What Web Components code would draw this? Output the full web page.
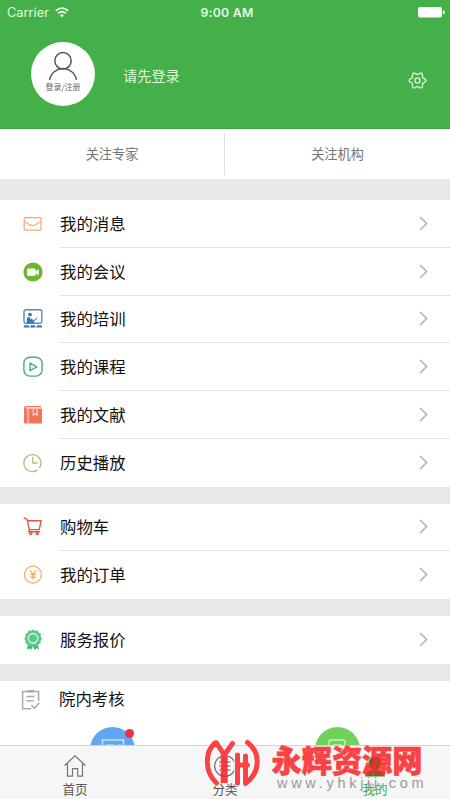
<!DOCTYPE html>
<html lang="zh-CN"><head><meta charset="utf-8"><title>我的</title>
<style>
html,body{margin:0;height:100%;overflow:hidden;background:#fff}
body{font-family:"Noto Sans CJK SC",sans-serif}
</style></head><body>
<app-screen></app-screen>
<script>
const define=(name,html,init)=>customElements.define(name,class extends HTMLElement{
  constructor(){super();const t=document.createElement('template');t.innerHTML=html;
    this.attachShadow({mode:'open'}).append(t.content.cloneNode(true));}
  connectedCallback(){if(init)init.call(this,this.shadowRoot);}
});
const icons={
mail:'<g fill="none" stroke="#f0a878" stroke-width="1.2"><rect x="1.2" y="3.6" width="16.8" height="12.6" rx=".8"/><path d="M1.6 8Q3.5 8.2 5.4 10q4 3.2 8.2 0 2-1.8 4.2-2"/></g>',
video:'<circle cx="10" cy="10" r="9.6" fill="#6cb52d"/><rect x="4" y="6.4" width="8.6" height="7.6" rx="1.4" fill="#fff"/><path d="M12.2 9.7 15.7 7v6.6l-3.5-2.4z" fill="#fff"/>',
train:'<rect x="1" y=".7" width="17.8" height="13.6" rx="2" fill="none" stroke="#4d8bc8" stroke-width="1.4"/><g fill="#3976b8"><circle cx="7" cy="5.6" r="1.9"/><path d="M3.8 14.4V10Q4 7.8 6.2 8L8 10.8l.8-2L10 11.8l4-3.4.5.7L11 12.6v1.8z"/><path d="M.4 18.6l1-2.4h4.2l1 2.4zM7 18.6l.8-2.4h4.1l.9 2.4zM13.3 18.6l.9-2.4h4.2l1 2.4z"/></g>',
play:'<g fill="none" stroke="#4bae79" stroke-width="1.4" stroke-linejoin="round"><rect x=".9" y=".3" width="18.2" height="18.8" rx="6"/><path d="M7 6v7.7l6.9-3.8z"/></g>',
book:'<path d="M1 3.2Q1 1 3 1h15v1.2H3.2v1.4H18.3a.7.7 0 0 1 .7.7V18.6H2a1 1 0 0 1-1-1z" fill="#f57558"/><path d="M5.1 4v14.5M10.2 3.8v6.4l1.9-1.5 1.9 1.5V3.8" fill="none" stroke="#ffd9cd" stroke-width="1.1"/>',
clock:'<g fill="none" stroke="#a9c36c" stroke-width="1.3" stroke-linecap="round"><path d="M14.2 17.1A8.5 8.5 0 1 1 16.6 14.6"/><path d="M9.8 4.4v5.6h4.3"/></g>',
cart:'<g fill="none" stroke="#dc5a43" stroke-width="1.4" stroke-linejoin="round" stroke-linecap="round"><path d="M1.2 .8 4 2.4 6.4 12.6h9.8L18.2 3.8H4.4"/><path d="M6.4 12.6 5.7 14.8H16.5"/><circle cx="7.8" cy="16.5" r="1.1"/><circle cx="14.3" cy="16.5" r="1.1"/></g>',
yen:'<g fill="none" stroke="#eeae57" stroke-width="1.25"><circle cx="10" cy="9.6" r="8.5"/><path d="M7 5.3l3 4 3-4M10 9.1v5.5M7.2 9.6h5.6M7.2 12h5.6"/></g>',
medal:'<path d="M5.2 13 3.8 19.5l2.8-1.2 1.4 2 1.8-4 2 4 1.4-2 2.8 1.2L14.8 13z" fill="#43b778"/><path d="M10-.6l2 1.3 2.5-.3 1.2 2.2 2.2 1.2-.2 2.6L19 8.7l-1.4 2.1.1 2.5-2.3 1-1.3 2.1-2.5-.2-1.6 1.1-1.9-1.1-2.4.1-1.1-2.1-2.2-1.1.2-2.4L1.2 8.7l1.3-2.3-.1-2.5 2.2-1.2 1-2.2L8 .7z" fill="#57c98b"/><circle cx="10" cy="8.3" r="4.7" fill="none" stroke="#d9f7df" stroke-width="1.5"/>',
check:'<g fill="none" stroke="#aaa" stroke-width="1.5"><path d="M17.6 11V1.6H1.6v17.2h8.4M5.4 6.6h8M5.4 10.8h7"/><path d="M6 1.3h7" stroke-width="2.4"/><path d="M10.5 15.2 13.5 18.2 18.4 12.8"/></g>'
};
const gear=Array.from({length:72},(_,i)=>{const a=i*Math.PI/36,r=7.5+1.25*Math.cos(6*a);
  return (10+r*Math.cos(a)).toFixed(2)+','+(10+r*Math.sin(a)).toFixed(2);}).join(' ');
define('status-bar',`<style>:host{display:grid;grid-template-columns:1fr auto 1fr;align-items:center;height:24px;padding:0 7px;color:#e4fae4;font:12.8px "Inter","Liberation Sans",sans-serif}
.l{display:flex;align-items:center;gap:6px}.time{font-weight:600;font-size:12.3px;letter-spacing:.25px;padding-left:4px}.b{justify-self:end;display:block;margin-right:-2px}</style>
<div class="l"><span>Carrier</span><svg width="14" height="11" viewBox="0 0 14 11" fill="none" stroke="#e8ffe8" stroke-width="1.8"><path d="M.8 3.7Q7-1.4 13.2 3.7M3 6.4Q7 3 11 6.4"/><path d="M5 8.1Q7 6.6 9 8.1L7 10.4z" fill="#e8ffe8" stroke="none"/></svg></div>
<span class="time">9:00 AM</span><svg class="b" width="27" height="11" viewBox="0 0 27 11" fill="#fff"><rect width="24" height="10.5" rx="2"/><path d="M25 3.2q1.7.2 1.7 2T25 7.4z"/></svg>`);
define('profile-header',`<style>:host{display:flex;flex-direction:column;height:129px;background:#43b049;box-sizing:border-box;border-bottom:1px solid #39a442}
.r{display:flex;align-items:center;padding:18px 23px 0 31px}
.a{width:64px;height:64px;border-radius:50%;background:#fff;display:flex;flex-direction:column;align-items:center;box-sizing:border-box;padding-top:9px;font-size:8px;line-height:12px;color:#666;white-space:nowrap}
.a svg{margin-bottom:0;flex:none}.n{font-size:14.2px;line-height:20px;color:#e2f9df;margin-left:28px;flex:1;padding-top:2px}.g{margin-top:13px}</style>
<status-bar></status-bar><div class="r"><div class="a"><svg width="30" height="30" viewBox="0 0 30 30" fill="none" stroke="#555" stroke-width="1.5"><circle cx="15" cy="9.8" r="8.2"/><path d="M1.5 29C3 21.5 9 17.6 15 17.6S27 21.5 28.5 29"/></svg><span>登录/注册</span></div>
<span class="n">请先登录</span><svg class="g" width="19" height="19" viewBox="0 0 20 20" fill="none" stroke="#cff5cc" stroke-width="1.5" stroke-linejoin="round"><polygon points="${gear}"/><circle cx="10" cy="10" r="2.7"/></svg></div>`);
define('follow-tabs',`<style>:host{display:grid;grid-template-columns:1fr 1fr;height:50px;align-items:center;text-align:center;font-size:13.2px;color:#777;background:#fff}
span{height:42px;line-height:42px;box-sizing:border-box}.first{border-right:1px solid #dedfe0}</style><span class="first">关注专家</span><span>关注机构</span>`);
define('list-group',`<style>:host{display:block;border-top:var(--gap,17px) solid #e8e8e8;background:#fff}</style><slot></slot>`);
define('list-row',`<style>:host{display:flex;height:var(--h,47.75px);align-items:stretch;font-size:16.4px;color:#111}
.i{width:20px;flex:none;margin-left:23px;align-self:center;display:flex}
.c{flex:1;margin-left:17px;display:flex;align-items:center;justify-content:space-between;border-bottom:1px solid #e4e4e4;padding-right:22px;white-space:nowrap;line-height:24px}
.t{margin-top:var(--lift,-1px)}
:host([last]) .c{border-color:transparent}:host([plain]) .v{display:none}:host([plain]) .i{margin-left:21px}:host([plain]) .c{margin-left:18px}</style>
<span class="i"></span><div class="c"><span class="t"><slot></slot></span><svg class="v" width="9" height="15" viewBox="0 0 9 15" fill="none" stroke="#b5b5b5" stroke-width="1.7"><path d="M1 1l6.6 6.5L1 14"/></svg></div>`,function(r){r.querySelector('.i').innerHTML='<svg width="20" height="20" viewBox="0 0 20 20" overflow="visible">'+icons[this.getAttribute('icon')]+'</svg>';});
define('round-entries',`<style>:host{display:grid;grid-template-columns:1fr 1fr;padding-top:7px;height:19px;overflow:hidden}
.e{justify-self:center;position:relative;height:45px;width:45px;border-radius:50%}.b{background:#61a6f3}.g{background:#70d25c}
i{position:absolute;right:1px;top:2px;width:9px;height:9px;border-radius:50%;background:#ef3038}</style>
<div class="e b"><svg width="45" height="45" viewBox="0 0 45 45" fill="none" stroke="#cce7ff" stroke-width="1.4"><rect x="12.5" y="13" width="21" height="18"/><path d="M16 18.3h9m3 0h3"/></svg><i></i></div>
<div class="e g"><svg width="45" height="45" viewBox="0 0 45 45" fill="none" stroke="#c3f7b8" stroke-width="1.4"><rect x="14" y="13" width="16" height="20" rx="2"/><path d="M18 18h9"/></svg></div>`);
define('tab-bar',`<style>:host{display:grid;grid-template-columns:repeat(3,1fr);height:54px;box-sizing:border-box;border-top:1px solid #d3d3d3;background:#f6f6f6;font-size:12.6px;line-height:18px;color:#555;text-align:center}
div{display:flex;flex-direction:column;align-items:center;padding-top:8px}svg{margin-bottom:2px;height:24px}.on{color:#3fae45}</style>
<div><svg width="24" height="24" viewBox="0 0 24 24" fill="none" stroke="#777" stroke-width="1.2"><path d="M1.5 11.6 12 1.7l10.5 9.9M4.5 9v13.2h5v-7.6h5.2v7.6h4.8V9"/></svg>首页</div>
<div><svg width="24" height="24" viewBox="0 0 24 24" fill="none" stroke="#666" stroke-width="1.1"><circle cx="12" cy="12" r="10.3"/><path d="M6 8h1.5m2 0h8M6 12h1.5m2 0h8M6 16h1.5m2 0h8"/></svg>分类</div>
<div class="on"><svg width="24" height="24" viewBox="0 0 24 24" fill="#2c8a28"><circle cx="12" cy="9" r="6.5"/><path d="M2 22.5q1-7 10-7t10 7z"/></svg>我的</div>`);
define('site-mark',`<style>:host{display:block;position:absolute;left:203px;top:737px;width:225px;height:60px}
svg{display:block}text{font-family:"Noto Sans CJK SC",sans-serif}</style>
<svg width="225" height="60" viewBox="0 0 225 60"><defs><g id="m"><path d="M12 6C1.5 15 1.5 35 13.5 46M13.5 6 21.3 18 29.5 6.5M34.5 18v28M34.5 28h10M44.5 5.5C58.5 16 57 36 42.5 46.5V19"/></g></defs><g fill="none" stroke-linecap="round" stroke-linejoin="round">
<use href="#m" stroke="#fff" stroke-width="7" opacity=".8"/>
<g opacity=".85"><path d="M21.2 18v28" stroke="#fb1c22" stroke-width="7" stroke-linecap="butt"/></g><use href="#m" stroke="#f94345" stroke-width="5"/></g>
<text x="68.5" y="35" font-size="30.2" font-weight="900" fill="none" stroke="#fff" stroke-width="3" opacity=".6" textLength="151" lengthAdjust="spacing" aria-hidden="true"></text>
<text x="68.5" y="35" font-size="30.2" font-weight="900" fill="#fb2529" stroke="#fb2529" stroke-width=".7" opacity=".86" textLength="151" lengthAdjust="spacing">永辉资源网</text>
<text x="74" y="51" style="font-family:'Liberation Sans',sans-serif" font-size="14.5" fill="#999" textLength="146.5" lengthAdjust="spacing">www.yhkjjj.com</text></svg>`);
define('app-screen',`<style>:host{display:flex;flex-direction:column;width:450px;height:799px;position:relative;overflow:hidden;background:#fff}main{flex:1;min-height:0;overflow:hidden}</style>
<profile-header></profile-header><main><follow-tabs></follow-tabs>
<list-group style="--gap:21px"><list-row icon="mail">我的消息</list-row><list-row icon="video">我的会议</list-row><list-row icon="train">我的培训</list-row><list-row icon="play">我的课程</list-row><list-row icon="book">我的文献</list-row><list-row icon="clock" last>历史播放</list-row></list-group>
<list-group style="--gap:17px"><list-row icon="cart">购物车</list-row><list-row icon="yen" last>我的订单</list-row></list-group>
<list-group><list-row icon="medal" last>服务报价</list-row></list-group>
<list-group><list-row icon="check" plain last style="--h:39px;--lift:-3px">院内考核</list-row><round-entries></round-entries></list-group></main>
<tab-bar></tab-bar><site-mark></site-mark>`);
</script></body></html>
